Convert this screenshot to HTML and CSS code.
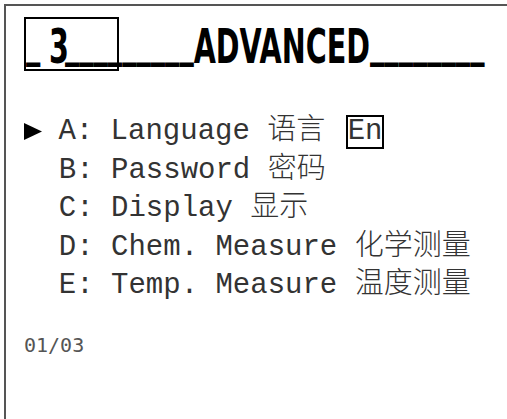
FILE: index.html
```html
<!DOCTYPE html>
<html lang="zh">
<head>
    <meta charset="UTF-8">
    <meta name="viewport" content="width=device-width, initial-scale=1.0">
    <title>Advanced</title>
    <link rel="stylesheet" href="styles.css">
</head>
<body>

    <div class="screen">
        <div class="title"><span class="big"><span class="u">_</span><span class="num">3</span><span class="u">_________</span>ADVANCED<span class="u">________</span></span></div>

        <div class="menu">
            <div class="row"><svg class="arrow" viewBox="0 0 18 17"><path d="M0 0L18 8.5L0 17Z"/></svg> A: Language <span class="cn">语言</span> <span class="val">En</span></div>
            <div class="row">  B: Password <span class="cn">密码</span></div>
            <div class="row">  C: Display <span class="cn">显示</span></div>
            <div class="row">  D: Chem. Measure <span class="cn">化学测量</span></div>
            <div class="row">  E: Temp. Measure <span class="cn">温度测量</span></div>
        </div>

        <div class="page">01/03</div>
    </div>

</body>
</html>
```

FILE: styles.css
```css
body {
    margin: 0;
    padding: 4px 0 0 4px;
    background-color: #ffffff;
    font-family: "Liberation Mono", monospace;
    overflow: hidden;
}
.screen {
    height: 415px;
    box-sizing: border-box;
    border-top: 2px solid #555;
    border-left: 2px solid #555;
    padding: 11px 0 0 18px;
}

/* header line, squeezed heavy font */
.title {
    position: relative;
    height: 54px;
    padding-left: 2px;
    overflow: hidden;
    font-family: "DejaVu Sans Condensed", "DejaVu Sans", sans-serif;
    font-weight: bold;
    font-size: 44px;
    color: #000;
}
/* frame around the page number */
.title::before {
    content: "";
    position: absolute;
    left: 0;
    top: 0;
    width: 95px;
    height: 54px;
    box-sizing: border-box;
    border: 2px solid #000;
}
.big {
    display: inline-block;
    margin-top: 2px;
    line-height: 1;
    white-space: nowrap;
    transform: scale(0.723, 1.09);
    transform-origin: 0 37px;
}
.u {
    vertical-align: 6px;
}
.num {
    margin-left: 12px;
    margin-right: -5.5px;
}

/* menu list */
.menu {
    margin-top: 42px;
    font-size: 29px;
    line-height: 38.5px;
    color: #333;
}
.row {
    white-space: pre;
}
.arrow {
    width: 18px;
    height: 17px;
    vertical-align: -1px;
    margin-right: -1px;
    fill: #000;
}
.cn {
    font-family: "Noto Sans CJK SC", sans-serif;
    font-weight: 300;
    line-height: 20px;
}
.val {
    display: inline-block;
    margin-left: 3px;
    line-height: 30px;
    border: 2px solid #000;
}

.page {
    margin-top: 27px;
    font-family: "DejaVu Sans Mono", monospace;
    font-size: 20px;
    line-height: 24px;
    color: #555;
}
```
